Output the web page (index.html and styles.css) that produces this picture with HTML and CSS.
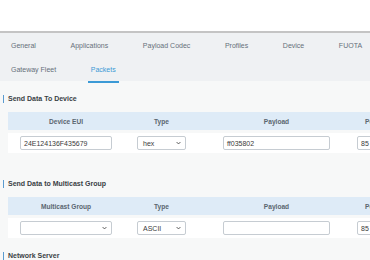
FILE: index.html
```html
<!DOCTYPE html>
<html>
<head>
<meta charset="utf-8">
<link rel="stylesheet" href="styles.css">
</head>
<body>
<div class="topbar"></div>
<nav class="tabs">
  <div class="tab-row">
    <span class="tab">General</span>
    <span class="tab">Applications</span>
    <span class="tab">Payload Codec</span>
    <span class="tab">Profiles</span>
    <span class="tab">Device</span>
    <span class="tab">FUOTA</span>
  </div>
  <div class="tab-row">
    <span class="tab">Gateway Fleet</span>
    <span class="tab active">Packets</span>
  </div>
</nav>
<main class="content">
  <section class="section">
    <h3 class="section-title">Send Data To Device</h3>
    <div class="grid head">
      <div class="cell">Device EUI</div>
      <div class="cell">Type</div>
      <div class="cell">Payload</div>
      <div class="cell cell-last">Port</div>
    </div>
    <div class="grid row">
      <div class="cell"><div class="input w-eui">24E124136F435679</div></div>
      <div class="cell"><div class="input select w-type"><span>hex</span><svg class="chev" viewBox="0 0 8 5" width="5" height="4"><path d="M1 1l3 3 3-3" fill="none" stroke="#444" stroke-width="1.4"/></svg></div></div>
      <div class="cell"><div class="input w-payload">ff035802</div></div>
      <div class="cell cell-last"><div class="input w-port">85</div></div>
    </div>
  </section>
  <section class="section mid">
    <h3 class="section-title">Send Data to Multicast Group</h3>
    <div class="grid head">
      <div class="cell">Multicast Group</div>
      <div class="cell">Type</div>
      <div class="cell">Payload</div>
      <div class="cell cell-last">Port</div>
    </div>
    <div class="grid row">
      <div class="cell"><div class="input select w-eui"><span></span><svg class="chev" viewBox="0 0 8 5" width="5" height="4"><path d="M1 1l3 3 3-3" fill="none" stroke="#444" stroke-width="1.4"/></svg></div></div>
      <div class="cell"><div class="input select w-type"><span>ASCII</span><svg class="chev" viewBox="0 0 8 5" width="5" height="4"><path d="M1 1l3 3 3-3" fill="none" stroke="#444" stroke-width="1.4"/></svg></div></div>
      <div class="cell"><div class="input w-payload"></div></div>
      <div class="cell cell-last"><div class="input w-port">85</div></div>
    </div>
  </section>
  <section class="section last">
    <h3 class="section-title">Network Server</h3>
  </section>
</main>
</body>
</html>
```
FILE: styles.css
```css
* { box-sizing: border-box; }
html, body { margin: 0; padding: 0; }
body {
  width: 370px;
  height: 260px;
  overflow: hidden;
  background: #f7f8f8;
  font-family: "Liberation Sans", Arial, sans-serif;
  font-size: 7px;
  color: #333;
}
.topbar {
  height: 35px;
  background: #fff;
  border-bottom: 2px solid #c4c4c4;
}
.tabs {
  background: #eff1f3;
  padding-left: 11px;
  height: 48px;
}
.tab-row {
  display: flex;
  gap: 34.6px;
  height: 24px;
  align-items: center;
}
.tab {
  color: #66707a;
  white-space: nowrap;
  position: relative;
}
.tab.active {
  color: #3b9ad6;
}
.tab.active::after {
  content: "";
  position: absolute;
  left: -3px;
  right: -3px;
  top: 15px;
  height: 2px;
  background: #3b9ad6;
}
.topbar { height: 33px; }
.content {
  padding-top: 14px;
}
.section {
  margin-bottom: 27px;
}
.section.mid { margin-bottom: 14px; }
.section-title {
  margin: 0 0 9px 3px;
  padding-left: 4px;
  border-left: 1.5px solid #5a9bd0;
  font-size: 7px;
  line-height: 8px;
  font-weight: bold;
  color: #3a3f45;
}
.grid {
  display: grid;
  grid-template-columns: 116px 75px 155px 40px;
  margin-left: 8px;
  width: 400px;
}
.head {
  background: #deebf7;
  height: 18px;
  align-items: center;
  font-weight: bold;
  font-size: 6.6px;
  color: #5b6670;
  margin-bottom: 3px;
}
.row {
  background: #fff;
  height: 20px;
  align-items: center;
}
.cell {
  display: flex;
  justify-content: center;
  white-space: nowrap;
}
.cell-last {
  justify-content: flex-start;
  padding-left: 11px;
}
.row .cell-last { padding-left: 3px; }
.input {
  height: 14px;
  border: 1px solid #c6ccd2;
  border-radius: 2px;
  background: #fff;
  padding: 0 3px;
  display: flex;
  align-items: center;
  color: #3a3a3a;
  font-size: 7px;
}
.select {
  justify-content: space-between;
  padding: 0 4px 0 5px;
}
.chev { display: block; }
.w-eui { width: 92px; }
.w-type { width: 49px; }
.w-payload { width: 107px; }
.w-port { width: 40px; }
.section.last { margin-bottom: 0; }
```
